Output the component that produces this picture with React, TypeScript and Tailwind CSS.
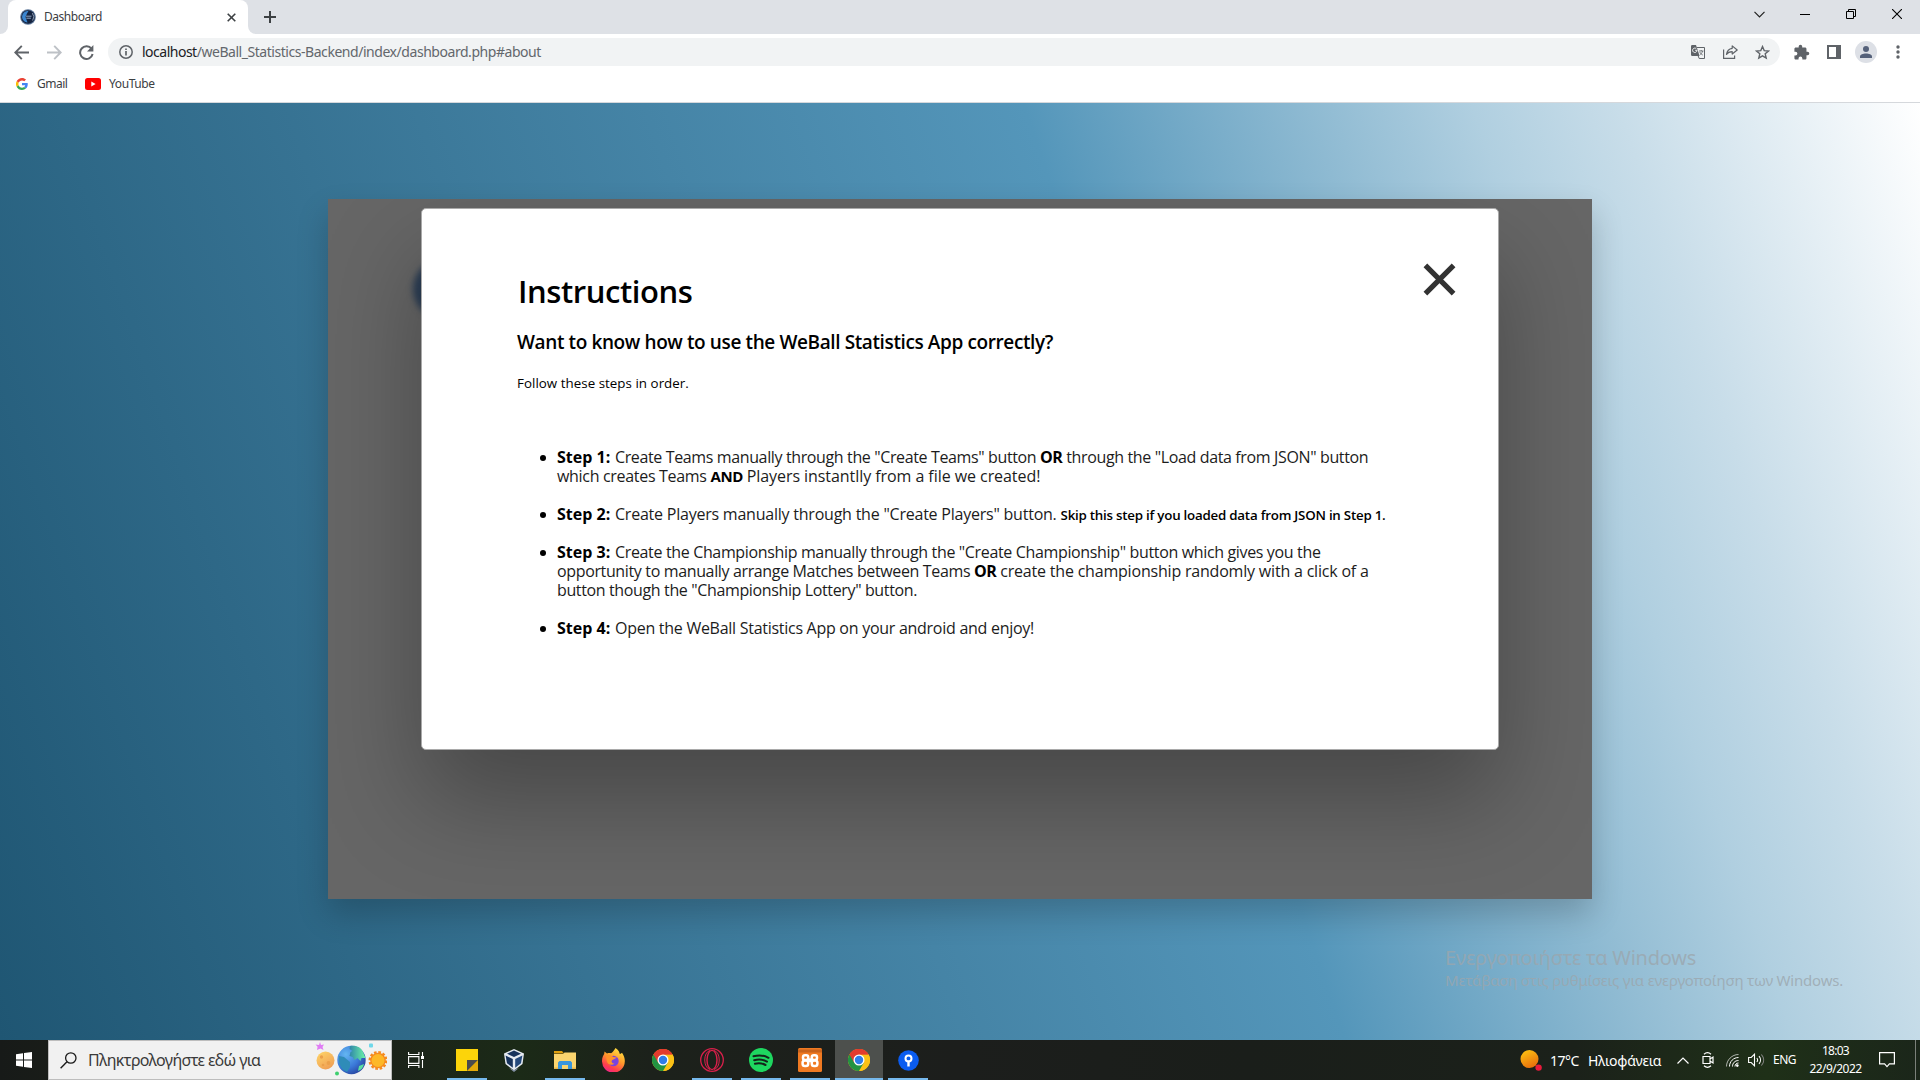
import React from "react";
import type { ReactNode } from "react";

function ChromeLogo({ size }: { size: number }) {
  return (
    <svg width={size} height={size} viewBox="0 0 24 24">
      <circle cx="12" cy="12" r="12" fill="#fbc116" />
      <path d="M12 12 1.6 6A12 12 0 0 1 22.4 6L12 6.6Z" fill="#e33b2e" />
      <path d="M22.4 6A12 12 0 0 1 12 24L17.2 15 12 6Z" fill="#fbc116" />
      <path d="M1.6 6A12 12 0 0 0 12 24L17.2 15 12 12Z" fill="#229342" />
      <path d="M1.6 6 6.8 15 12 12 12 6 22.4 6A12 12 0 0 0 1.6 6Z" fill="#e33b2e" />
      <circle cx="12" cy="12" r="6" fill="#fff" />
      <circle cx="12" cy="12" r="4.6" fill="#2f7de9" />
    </svg>
  );
}

function WeBallLogo({ size }: { size: number }) {
  return (
    <svg width={size} height={size} viewBox="0 0 16 16">
      <circle cx="8" cy="8" r="7.8" fill="#5c7698" />
      <circle cx="8" cy="8" r="6.8" fill="#15233f" />
      <path d="M2.6 5.500A5.800 5.800 0 0 1 8.500 2L7 4.500 5.500 8 7.500 13.500A5.600 5.600 0 0 1 2.600 5.500Z" fill="#3b86d0" />
      <path d="M6 7.2h5.500M6.400 9.200h4.500" stroke="#9fb4cf" strokeWidth=".9" />
      <path d="M12.4 4.2A6 6 0 0 1 12.600 11.500" stroke="#8fa0b8" fill="none" />
    </svg>
  );
}

function TabStrip() {
  return (
    <div className="flex h-[34px] bg-[#dee1e6]">
      <div className="flex h-[34px] w-[256px] items-end">
        <div className="h-2 w-2 bg-white">
          <div className="h-2 w-2 rounded-br-lg bg-[#dee1e6]" />
        </div>
        <div className="flex h-[34px] w-[240px] items-center rounded-t-lg bg-white pr-[12px] pl-[12px]">
          <WeBallLogo size={16} />
          <span className="ml-[8px] text-[12px] leading-4 tracking-[-0.46px] text-[#3c4043]">Dashboard</span>
          <svg className="ml-auto" width="9" height="9" viewBox="0 0 9 9">
            <path d="M.7.7l7.6 7.6M8.3.7.7 8.3" stroke="#3c4043" strokeWidth="1.6" />
          </svg>
        </div>
        <div className="h-2 w-2 bg-white">
          <div className="h-2 w-2 rounded-bl-lg bg-[#dee1e6]" />
        </div>
      </div>
      <svg className="mt-[11px] ml-[8px]" width="12" height="12" viewBox="0 0 12 12">
        <path d="M6 0v12M0 6h12" stroke="#3c4043" strokeWidth="2" />
      </svg>
      <div className="ml-auto flex h-[28px] items-center">
        <div className="flex w-[46px] justify-center">
          <svg width="11" height="7" viewBox="0 0 11 7"><path d="M.5.8l5 5 5-5" stroke="#222" strokeWidth="1.2" fill="none" /></svg>
        </div>
        <div className="flex w-[46px] justify-center">
          <div className="h-px w-[10px] bg-black" />
        </div>
        <div className="flex w-[46px] justify-center">
          <svg width="10" height="10" viewBox="0 0 10 10"><path d="M.5 2.500h7v7h-7zM2.500 2.500v-2h7v7h-2" stroke="#000" fill="none" /></svg>
        </div>
        <div className="flex w-[46px] justify-center">
          <svg width="10" height="10" viewBox="0 0 10 10"><path d="M0 0l10 10M10 0 0 10" stroke="#000" strokeWidth="1.1" /></svg>
        </div>
      </div>
    </div>
  );
}

function Toolbar() {
  return (
    <div className="flex h-[36px] items-center bg-white pr-[6px]">
      <svg className="ml-[14px]" width="15" height="15" viewBox="0 0 15 15"><path d="M15 7.500H2M7.800.9 1.300 7.500l6.500 6.600" stroke="#5f6368" strokeWidth="1.9" fill="none" /></svg>
      <svg className="ml-[18px]" width="15" height="15" viewBox="0 0 15 15"><path d="M0 7.500h13M7.200.9l6.500 6.600-6.500 6.600" stroke="#bdc1c6" strokeWidth="1.9" fill="none" /></svg>
      <svg className="ml-[17px]" width="15" height="15" viewBox="0 0 15 15">
        <path d="M12.600 4A6.300 6.300 0 1 0 13.600 9" stroke="#5f6368" strokeWidth="2" fill="none" />
        <path d="M14.400 0v6.400H8z" fill="#5f6368" />
      </svg>
      <div className="ml-[14px] flex h-[28px] w-[1672px] items-center rounded-full bg-[#f1f3f4] pr-[10px] pl-[11px]">
        <svg width="14" height="14" viewBox="0 0 14 14">
          <circle cx="7" cy="7" r="6.200" stroke="#5f6368" strokeWidth="1.500" fill="none" />
          <path d="M7 6v4.400M7 3.400V5" stroke="#5f6368" strokeWidth="1.700" />
        </svg>
        <span className="ml-[9px] text-[14px] leading-5 tracking-[-0.5px] whitespace-pre text-[#202124]">localhost<span className="tracking-[-0.455px] text-[#63676c]">/weBall_Statistics-Backend/index/dashboard.php#about</span></span>
        <div className="ml-auto flex items-center">
          <svg width="14" height="14" viewBox="0 0 14 14">
            <path d="M0 1.200A1.200 1.200 0 0 1 1.200 0H5l3.600 11H1.200A1.200 1.200 0 0 1 0 9.800Z" fill="#5f6368" />
            <path d="M6 2.500h7.500v11H8.200l-1-2.500" stroke="#5f6368" fill="none" />
            <path d="M6 5.300H4.200M6 5.300A2.200 2.200 0 1 1 5.200 3.600" stroke="#fff" fill="none" strokeWidth=".9" />
            <path d="M8 6h4.500M10.200 5v1M11.600 6c-.4 1.800-1.600 3-2.600 3.700M8.800 7c.5 1.400 1.800 2.500 3 3" stroke="#5f6368" fill="none" strokeWidth=".8" />
          </svg>
          <svg className="ml-[18px]" width="15" height="14" viewBox="0 0 15 14">
            <path d="M.6 4.500v8.900h11v-3" stroke="#5f6368" strokeWidth="1.200" fill="none" />
            <path d="M9.200.9 14.200 5l-5 4V6.600C6.500 6.600 4.700 7.500 3.500 9.400 4 6 5.900 3.800 9.200 3.300Z" stroke="#5f6368" strokeWidth="1.200" fill="none" strokeLinejoin="round" />
          </svg>
          <svg className="ml-[17px]" width="15" height="15" viewBox="0 0 15 15">
            <path d="M7.500 1.600 9.200 5.600l4.300.4-3.300 2.800 1 4.200L7.500 10.800 3.800 13l1-4.200L1.500 6l4.300-.4Z" stroke="#5f6368" strokeWidth="1.400" fill="none" />
          </svg>
        </div>
      </div>
      <svg className="mr-[1px] ml-[13px]" width="17" height="17" viewBox="0 0 24 24">
        <path fill="#5f6368" d="M20.500 11H19V7c0-1.100-.9-2-2-2h-4V3.500a2.500 2.500 0 0 0-5 0V5H4c-1.100 0-2 .9-2 2v3.800h1.500a2.700 2.700 0 0 1 0 5.400H2V20c0 1.100.9 2 2 2h3.800v-1.500a2.700 2.700 0 0 1 5.400 0V22H17c1.100 0 2-.9 2-2v-4h1.500a2.500 2.500 0 0 0 0-5z" />
      </svg>
      <svg className="ml-[16px]" width="14" height="14" viewBox="0 0 14 14"><path d="M1 1h12v12H1z" stroke="#5f6368" strokeWidth="2" fill="none" /><path d="M9 1h4v12H9z" fill="#5f6368" /></svg>
      <div className="ml-[14px] flex size-[22px] items-center justify-center rounded-full bg-[#dde0e6]">
        <svg width="12" height="12" viewBox="0 0 12 12"><circle cx="6" cy="3" r="3" fill="#55617a" /><path d="M0 12v-1.500C0 8.500 3 7.500 6 7.500s6 1 6 3V12Z" fill="#55617a" /></svg>
      </div>
      <svg className="ml-[19px]" width="4" height="14" viewBox="0 0 4 14"><g fill="#5f6368"><circle cx="2" cy="2" r="1.700" /><circle cx="2" cy="7" r="1.700" /><circle cx="2" cy="12" r="1.700" /></g></svg>
    </div>
  );
}

function Bookmarks() {
  return (
    <div className="flex h-[33px] items-center border-b border-[#d5d8dc] bg-white pb-[4px] text-[12px] text-[#3c4043]">
      <svg className="ml-[16px]" width="12" height="12" viewBox="0 0 48 48">
        <path fill="#EA4335" d="M24 9.500c3.500 0 6.700 1.200 9.200 3.600l6.900-6.900C35.900 2.400 30.500 0 24 0 14.600 0 6.500 5.400 2.600 13.200l8 6.200C12.400 13.700 17.700 9.500 24 9.500z" />
        <path fill="#4285F4" d="M47 24.600c0-1.600-.2-3.100-.4-4.600H24v9h12.900c-.6 3-2.200 5.500-4.700 7.200l7.700 6C44.400 38 47 31.800 47 24.600z" />
        <path fill="#FBBC05" d="M10.500 28.600a14.500 14.500 0 0 1 0-9.200l-8-6.200a24 24 0 0 0 0 21.600l8-6.200z" />
        <path fill="#34A853" d="M24 48c6.500 0 11.900-2.100 15.900-5.800l-7.700-6c-2.200 1.500-4.900 2.300-8.200 2.300-6.300 0-11.600-4.200-13.500-9.900l-8 6.200C6.500 42.600 14.600 48 24 48z" />
      </svg>
      <span className="ml-[9px] w-[31px] tracking-[-0.5px]">Gmail</span>
      <svg className="ml-[17px]" width="16" height="12" viewBox="0 0 16 12"><rect width="16" height="12" rx="2.500" fill="#f00" /><path d="M6.300 3.500v5L10.600 6z" fill="#fff" /></svg>
      <span className="ml-[8px] tracking-[-0.4px]">YouTube</span>
    </div>
  );
}

function Step({ n, children }: { n: number; children: ReactNode }) {
  return (
    <li className="flex whitespace-pre">
      <span className="mt-[7px] mr-[11px] ml-[23px] size-[6px] shrink-0 rounded-full bg-black" />
      <div>
        <b className="inline-block w-[58px] text-black">Step {n}:</b>
        {children}
      </div>
    </li>
  );
}

function Modal() {
  return (
    <section className="mt-[9px] ml-[93px] flex h-[542px] w-[1078px] rounded-[5px] border border-[#a9a9a9] bg-white pt-[62px] pl-[95px] font-['Open_Sans',sans-serif] text-black shadow-[0_50px_100px_rgba(0,0,0,0.3)]">
      <div className="w-[900px] shrink-0">
        <h1 className="h-[40px] pl-px text-[31px] leading-[41px] font-semibold tracking-[-0.43px]">Instructions</h1>
        <h2 className="mt-[19px] h-[24px] text-[19px] leading-[24px] font-semibold tracking-[-0.39px]">Want to know how to use the WeBall Statistics App correctly?</h2>
        <p className="mt-[21px] h-[16px] text-[13.33px] leading-[16px] font-medium tracking-[0.04px]">Follow these steps in order.</p>
        <ul className="mt-[57px] flex flex-col gap-[19px] text-[16px] leading-[19px] text-[#1c1c1c]">
          <Step n={1}>
            <span className="tracking-[-0.372px]">{'Create Teams manually through the "Create Teams" button '}</span>
            <b className="tracking-[-0.418px] text-black">OR </b>
            <span className="tracking-[-0.362px]">through the "Load data from JSON" button</span>
            <br />
            <span className="tracking-[-0.311px]">which creates Teams </span>
            <b className="text-[15px] tracking-[-0.35px] text-black">AND </b>
            <span className="tracking-[-0.06px]">Players instantlly from a file we created!</span>
          </Step>
          <Step n={2}>
            <span className="tracking-[-0.225px]">{'Create Players manually through the "Create Players" button. '}</span>
            <span className="text-[13.33px] leading-none font-semibold tracking-[-0.234px] text-black">Skip this step if you loaded data from JSON in Step 1.</span>
          </Step>
          <Step n={3}>
            <span className="tracking-[-0.349px]">Create the Championship manually through the "Create Championship" button which gives you the</span>
            <br />
            <span className="tracking-[-0.359px]">opportunity to manually arrange Matches between Teams </span>
            <b className="tracking-[-0.418px] text-black">OR </b>
            <span className="tracking-[-0.196px]">create the championship randomly with a click of a</span>
            <br />
            <span className="tracking-[-0.367px]">button though the "Championship Lottery" button.</span>
          </Step>
          <Step n={4}>
            <span className="tracking-[-0.273px]">Open the WeBall Statistics App on your android and enjoy!</span>
          </Step>
        </ul>
      </div>
      <svg className="-mt-[8px] ml-[6px]" width="33" height="33" viewBox="0 0 33 33">
        <path d="M2.400 2.400l28.200 28.200M30.600 2.400 2.400 30.600" stroke="#323232" strokeWidth="5.200" />
      </svg>
    </section>
  );
}

function Page() {
  return (
    <main className="relative h-[937px] bg-[linear-gradient(71deg,#1f5673_0%,#5496ba_60%,#b0cfe0_80%,#c8dde9_86.5%,#ffffff_100%)] pt-[96px]">
      <div className="relative mx-auto h-[700px] w-[1264px] shadow-[0_15px_30px_rgba(0,0,0,0.2)]">
        <div className="flex h-[700px] overflow-hidden bg-[#666]">
          <div className="absolute top-[60px] left-[85px] size-[60px] rounded-full bg-[#2b3d54] blur-[3px]" />
          <div className="relative">
            <Modal />
          </div>
        </div>
      </div>
      <div className="absolute top-[841px] left-[1445px] whitespace-nowrap text-[#9ba6ad]/80">
        <p className="text-[20px] leading-[28px] tracking-[-0.25px]">Ενεργοποιήστε τα Windows</p>
        <p className="text-[15px] leading-[17px] tracking-[-0.21px]">Μετάβαση στις ρυθμίσεις για ενεργοποίηση των Windows.</p>
      </div>
    </main>
  );
}

function AppCell({ children, running, active }: { children: ReactNode; running?: boolean; active?: boolean }) {
  return (
    <div className={active ? "flex h-[40px] w-[48px] flex-col items-center bg-[#4d504d]" : "flex h-[40px] w-[48px] flex-col items-center"}>
      <div className="flex h-[38px] items-center pt-[2px]">{children}</div>
      {running && <div className={active ? "h-[2px] w-[48px] bg-[#76b9ed]" : "h-[2px] w-[40px] bg-[#76b9ed]"} />}
    </div>
  );
}

function Planets() {
  return (
    <svg width="72" height="36" viewBox="0 0 72 36">
      <defs>
        <radialGradient id="earth" cx=".3" cy=".3" r=".8"><stop offset="0" stopColor="#63b6f2" /><stop offset=".6" stopColor="#3a78d8" /><stop offset="1" stopColor="#27439c" /></radialGradient>
        <linearGradient id="moon" x2=".6" y2="1"><stop stopColor="#ffd768" /><stop offset="1" stopColor="#f0a055" /></linearGradient>
        <linearGradient id="land" x1="0" x2="1"><stop stopColor="#2f86a8" /><stop offset="1" stopColor="#6df5a8" /></linearGradient>
      </defs>
      <path d="M5 0l1 3 3-.5L7.500 5 8.500 8 5.500 6.500 2 8l.6-3.200L.5 2.500 4 3Z" fill="#e07cf4" />
      <circle cx="10.500" cy="18.500" r="9" fill="url(#moon)" />
      <circle cx="6.500" cy="15" r="1.700" fill="#eba04a" /><circle cx="13.500" cy="21" r="1.900" fill="#eba04a" /><circle cx="8" cy="23" r="1.300" fill="#eba04a" />
      <circle cx="36.500" cy="18" r="14.200" fill="url(#earth)" />
      <path d="M35 4c6-1 11 1 13 6l2.500 6-4 0-1 3-3-3-3 2-2-3-3-1 1-4 2-1-3-2Z" fill="url(#land)" />
      <path d="M24 14l5 1 6 5 0 5-3 5c-5-2-9-7-8-16Z" fill="#2f8cb8" />
      <path d="M44 24l5-2c-1 4-3 6-6 7Z" fill="#5be0a0" />
      <circle cx="22" cy="31.500" r="2" fill="#3fcf6f" />
      <rect x="54" y="1.500" width="4" height="4" rx="1" fill="#6fd8ea" />
      <circle cx="63" cy="18.500" r="8.200" fill="none" stroke="#f58a1f" strokeWidth="2.600" strokeDasharray="2.600 1.700" />
      <circle cx="63" cy="18.500" r="7.800" fill="#f58a1f" /><circle cx="63" cy="18.500" r="6.500" fill="#fdb827" />
    </svg>
  );
}

function Taskbar() {
  return (
    <footer className="flex h-[40px] bg-[linear-gradient(90deg,#171a18_0%,#1c2118_8%,#1c1f1c_16%,#1b2a17_27%,#1c211b_34%,#1c1e1c_50%,#1a1e1a_65%,#1b211a_82%,#1f3018_92%,#1b261a_100%)] text-white">
      <div className="flex w-[48px] items-center justify-center">
        <svg width="16" height="16" viewBox="0 0 16 16"><path d="M0 2.200 7 1.200v6.300H0zM8 1.100 16 0v7.500H8zM0 8.500h7v6.300l-7-1zM8 8.500h8V16l-8-1.100z" fill="#fff" /></svg>
      </div>
      <div className="flex w-[344px] items-center border border-[#bdbdbd] bg-[#f1f1f1] pl-[11px]">
        <svg width="17" height="17" viewBox="0 0 17 17"><circle cx="10.800" cy="6" r="5.200" stroke="#1a1a1a" strokeWidth="1.300" fill="none" /><path d="M7 9.800.6 16.200" stroke="#1a1a1a" strokeWidth="1.400" /></svg>
        <span className="ml-[11px] text-[16px] tracking-[-0.64px] text-[#3a3a3a]">Πληκτρολογήστε εδώ για</span>
        <div className="mr-[4px] ml-auto"><Planets /></div>
      </div>
      <div className="mr-[3px] flex w-[48px] items-center justify-center">
        <svg width="17" height="16" viewBox="0 0 17 16">
          <path d="M.6 0v2.500h10.300V0M.6 16v-2.500h10.300V16M.6 4.600h10.300v6.800H.6z" stroke="#fff" strokeWidth="1.100" fill="none" />
          <path d="M14.500 0v4M14.500 8v8" stroke="#fff" strokeWidth="1.100" /><path d="M13 4h3v3h-3z" fill="#fff" />
        </svg>
      </div>
      <div className="flex gap-px">
        <AppCell running>
          <svg width="22" height="22" viewBox="0 0 22 22"><path d="M0 0h22v11L11 22H0z" fill="#fcd40a" /><path d="M11 11h11L11 22z" fill="#4b4a4d" /><path d="M22 11v11H11z" fill="#e3a90b" /></svg>
        </AppCell>
        <AppCell>
          <svg className="mr-[4px]" width="20" height="23" viewBox="0 0 20 23">
            <path d="M10 0 20 4.500 18.500 15 10 21.500 1.500 15 0 4.500Z" fill="#e6ebf2" />
            <path d="M10 1.500 17 4.700 10 8 3 4.700Z" fill="#17335c" /><path d="M1.600 6.500 8.800 10v8.800L3 14.200Z" fill="#17335c" /><path d="M18.400 6.500 11.200 10v8.800L17 14.200Z" fill="#24497c" />
            <path d="M5 19l5 4 5-4-5 2Z" fill="#8391a5" />
          </svg>
        </AppCell>
        <AppCell running>
          <svg className="mr-[1px]" width="22" height="18" viewBox="0 0 22 18"><path d="M0 0h8l2 2.500H0z" fill="#e0a010" /><path d="M0 3h9l1.500-1.500H22V18H0z" fill="#fbd56f" /><path d="M4 18v-6.500L5.500 10h11l1.500 1.500V18h-4v-4H8v4z" fill="#3a96dd" /><path d="M0 16.500h4V18H0zM18 16.500h4V18h-4z" fill="#e9b64a" /></svg>
        </AppCell>
        <AppCell>
          <svg className="mr-[1px]" width="23" height="24" viewBox="0 0 23 24">
            <defs><linearGradient id="fox" x1=".8" y1="0" x2=".3" y2="1"><stop stopColor="#ffe843" /><stop offset=".45" stopColor="#ff9a2b" /><stop offset=".8" stopColor="#ff3d4d" /><stop offset="1" stopColor="#f0248a" /></linearGradient></defs>
            <path d="M13.500 0c3 1.800 4 4.500 4.300 6C19 6 20 4.800 20 4.800c2 3 3 6 2.800 8.700A11.400 11.400 0 0 1 0 13C0 9.500 1.500 7 2.200 6L2.500 3.500 5 5.500c1.500-.6 3-.5 4-.3C10.500 4.500 12 2.500 13.500 0Z" fill="url(#fox)" />
            <circle cx="11.500" cy="13" r="5.200" fill="#7a43dd" /><path d="M4 7.500c3-1 5.500-.5 7 1.500l4 .5-3 1.800c-3.500 1-3 4 .5 4.500-3 2.200-7.500.7-7.800-3.300Z" fill="#ff9329" />
          </svg>
        </AppCell>
        <AppCell><ChromeLogo size={22} /></AppCell>
        <AppCell running>
          <svg width="24" height="24" viewBox="0 0 24 24"><g fill="none" stroke="#d9204b"><circle cx="12" cy="12" r="11.300" strokeWidth="1.300" /><ellipse cx="12" cy="12" rx="5" ry="9.600" strokeWidth="1.400" /><path d="M10 2.500C3 4 3 20 10 21.500M14 2.500c7 1.500 7 17.500 0 19" strokeWidth="1" /></g></svg>
        </AppCell>
        <AppCell running>
          <svg width="24" height="24" viewBox="0 0 24 24"><circle cx="12" cy="12" r="12" fill="#1ed760" /><path d="M4.500 8.300c5-1.500 10.500-1 15 1.500M5.200 12.200c4.500-1.300 9-.8 12.800 1.400M5.900 15.800c3.800-1 7.300-.6 10.600 1.200" stroke="#14231a" strokeWidth="2" strokeLinecap="round" fill="none" /></svg>
        </AppCell>
        <AppCell running>
          <svg width="24" height="24" viewBox="0 0 24 24">
            <rect width="24" height="24" rx="1.500" fill="#f07a22" /><path d="M0 1.500h24v3H0z" fill="#c9631c" />
            <g stroke="#fff" strokeWidth="2.500" fill="none">
              <rect x="5" y="7.300" width="5.200" height="4.800" rx="2" /><rect x="13.800" y="7.300" width="5.200" height="4.800" rx="2" />
              <rect x="4.600" y="12.400" width="5.600" height="5.600" rx="2.300" /><rect x="13.800" y="12.400" width="5.600" height="5.600" rx="2.300" />
              <path d="M10 12.300h4" strokeWidth="4" />
            </g>
          </svg>
        </AppCell>
        <AppCell running active><ChromeLogo size={22} /></AppCell>
        <AppCell running>
          <svg width="21" height="21" viewBox="0 0 21 21"><circle cx="10.500" cy="10.500" r="10.300" fill="#0a5cf0" /><circle cx="10.500" cy="8.600" r="3" stroke="#fff" strokeWidth="2" fill="none" /><path d="M10.500 10.500v6" stroke="#fff" strokeWidth="2.400" /></svg>
        </AppCell>
      </div>
      <div className="ml-auto flex items-center pr-[4px]">
        <svg className="mr-[8px]" width="22" height="22" viewBox="0 0 22 22">
          <defs><linearGradient id="sun" x1=".2" y1="0" x2=".7" y2="1"><stop stopColor="#fdc312" /><stop offset="1" stopColor="#e66b0c" /></linearGradient></defs>
          <circle cx="9.500" cy="10" r="9" fill="url(#sun)" /><circle cx="18.600" cy="18.600" r="3.200" fill="#e81a3c" />
        </svg>
        <span className="w-[38px] text-[14px] tracking-[-0.5px]">17°C</span>
        <span className="w-[83px] text-[14px] tracking-[-0.3px]">Ηλιοφάνεια</span>
        <div className="flex w-[24px] justify-center"><svg width="12" height="7" viewBox="0 0 12 7"><path d="M.5 6.500 6 1l5.500 5.500" stroke="#fff" strokeWidth="1.200" fill="none" /></svg></div>
        <div className="flex w-[25px] justify-center">
          <svg width="12" height="16" viewBox="0 0 12 16"><path d="M1 4.500h7v7H1zM8 7l3-2v6L8 9M2 2.200C4 .5 7 .5 9 2.200M2 13.800c2 1.700 5 1.700 7 0" stroke="#fff" strokeWidth="1.200" fill="none" /></svg>
        </div>
        <div className="flex w-[24px] justify-center">
          <svg width="13" height="13" viewBox="0 0 13 13"><g stroke="#fff" fill="none"><path d="M.5 12.500C.5 6 6 .5 12.500.5" opacity=".65" /><path d="M3.500 12.500c0-5 4-9 9-9M6.500 12.500c0-3.500 2.500-6 6-6M9 12.500c0-2 1.500-3.500 3.500-3.500" /></g><circle cx="11.300" cy="11.600" r="1.300" fill="#fff" /></svg>
        </div>
        <div className="flex w-[25px] justify-center">
          <svg width="17" height="14" viewBox="0 0 17 14"><path d="M.6 4.500h2.600L6.500 1.200v11.600L3.200 9.500H.6zM8.800 5c1 1.200 1 2.800 0 4M11 3.200c2 2.200 2 5.400 0 7.600" stroke="#fff" strokeWidth="1.100" fill="none" /><path d="M13.400 1.500c3 3.300 3 7.700 0 11" stroke="#888" strokeWidth="1.100" fill="none" /></svg>
        </div>
        <span className="ml-[4px] w-[29px] text-[12px] tracking-[-0.5px]">ENG</span>
        <div className="flex w-[68px] flex-col items-center pr-px text-[12px] leading-[18px]">
          <span className="tracking-[-0.73px]">18:03</span>
          <span className="tracking-[-0.55px]">22/9/2022</span>
        </div>
        <svg className="mr-[20px] ml-[9px]" width="16" height="16" viewBox="0 0 16 16"><path d="M.6.6h14.800v11.300h-5L8 14.600l-2.400-2.700h-5z" stroke="#fff" strokeWidth="1.200" fill="none" /></svg>
        <div className="h-[40px] w-px bg-[#7b807a]" />
      </div>
    </footer>
  );
}

export default function App() {
  return (
    <div className="h-[1080px] w-[1920px] overflow-hidden font-['Noto_Sans','Open_Sans',sans-serif]">
      <TabStrip />
      <Toolbar />
      <Bookmarks />
      <Page />
      <Taskbar />
    </div>
  );
}
